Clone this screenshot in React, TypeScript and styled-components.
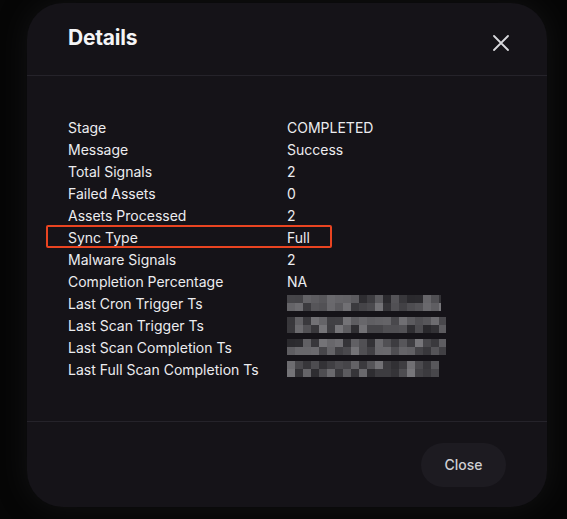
import React from 'react';
import styled, { createGlobalStyle } from 'styled-components';

const GlobalStyle = createGlobalStyle`
  html, body {
    margin: 0;
    padding: 0;
    background: #060606;
  }
  body {
    font-family: Inter, "Noto Sans", "Liberation Sans", sans-serif;
    -webkit-font-smoothing: antialiased;
  }
`;

type Row = { label: string; value?: string; hidden?: number; highlight?: boolean };

const rows: Row[] = [
  { label: 'Stage', value: 'COMPLETED' },
  { label: 'Message', value: 'Success' },
  { label: 'Total Signals', value: '2' },
  { label: 'Failed Assets', value: '0' },
  { label: 'Assets Processed', value: '2' },
  { label: 'Sync Type', value: 'Full', highlight: true },
  { label: 'Malware Signals', value: '2' },
  { label: 'Completion Percentage', value: 'NA' },
  { label: 'Last Cron Trigger Ts', hidden: 154 },
  { label: 'Last Scan Trigger Ts', hidden: 159 },
  { label: 'Last Scan Completion Ts', hidden: 159 },
  { label: 'Last Full Scan Completion Ts', hidden: 152 },
];

// pseudo random greys for the redacted timestamps
function greys(seed: number, count: number) {
  const out: string[] = [];
  let s = seed;
  for (let i = 0; i < count; i++) {
    s = (s * 9301 + 49297) % 233280;
    const v = 40 + Math.floor((s / 233280) * 80);
    out.push(`rgb(${v},${v - 1},${v + 3})`);
  }
  return out;
}

function Redacted({ width, seed }: { width: number; seed: number }) {
  const cell = 8;
  const cols = Math.ceil(width / cell);
  const colours = greys(seed, cols * 2);
  return (
    <svg width={width} height={16} viewBox={`0 0 ${width} 16`}>
      {colours.map((c, i) => (
        <rect
          key={i}
          x={(i % cols) * cell}
          y={Math.floor(i / cols) * cell}
          width={cell}
          height={cell}
          fill={c}
        />
      ))}
    </svg>
  );
}

export default function App() {
  return (
    <>
      <GlobalStyle />
      <Page>
        <Modal>
          <Header>
            <Title>Details</Title>
            <CloseIcon aria-label="close">
              <svg width="16" height="16" viewBox="0 0 16 16">
                <path d="M1 1 L15 15 M15 1 L1 15" stroke="#d8d8dc" strokeWidth="1.8" strokeLinecap="round" />
              </svg>
            </CloseIcon>
          </Header>
          <Body>
            {rows.map((r, i) => (
              <DetailRow key={r.label}>
                {r.highlight && <Highlight />}
                <Label>{r.label}</Label>
                {r.hidden ? (
                  <Value>
                    <Redacted width={r.hidden} seed={i * 71 + 13} />
                  </Value>
                ) : (
                  <Value>{r.value}</Value>
                )}
              </DetailRow>
            ))}
          </Body>
          <Footer>
            <CloseButton>Close</CloseButton>
          </Footer>
        </Modal>
      </Page>
    </>
  );
}

const Page = styled.div`
  width: 567px;
  height: 519px;
  padding: 3px 0 0 27px;
  box-sizing: border-box;
  background: #060606;
`;

const Modal = styled.div`
  width: 520px;
  height: 504px;
  background: #151318;
  border-radius: 36px;
  box-shadow: 0 0 30px rgba(40, 40, 44, 0.35);
  display: flex;
  flex-direction: column;
  overflow: hidden;
`;

const Header = styled.div`
  height: 73px;
  padding: 0 38px 0 41px;
  display: flex;
  align-items: center;
  justify-content: space-between;
  border-bottom: 1px solid #25232a;
  box-sizing: border-box;
`;

const Title = styled.h2`
  margin: 0 0 4px;
  font-size: 21px;
  font-weight: 700;
  color: #f4f4f6;
  letter-spacing: -0.2px;
`;

const CloseIcon = styled.button`
  background: none;
  border: 0;
  padding: 0;
  margin-top: 8px;
  display: flex;
  cursor: pointer;
`;

const Body = styled.div`
  flex: 1;
  padding: 40px 41px 0;
  display: flex;
  flex-direction: column;
`;

const DetailRow = styled.div`
  position: relative;
  display: grid;
  grid-template-columns: 219px 1fr;
  align-items: center;
  height: 22px;
`;

const Highlight = styled.div`
  position: absolute;
  left: -22px;
  top: -1px;
  width: 286px;
  height: 23px;
  border: 2px solid #ea4421;
  border-radius: 2px;
  box-sizing: border-box;
`;

const Label = styled.span`
  font-size: 14px;
  color: #ececef;
`;

const Value = styled.span`
  font-size: 14px;
  color: #ececef;
  display: flex;
  align-items: center;
`;

const Footer = styled.div`
  height: 86px;
  border-top: 1px solid #25232a;
  padding: 0 41px;
  display: flex;
  align-items: center;
  justify-content: flex-end;
  box-sizing: border-box;
`;

const CloseButton = styled.button`
  width: 85px;
  height: 44px;
  border: 0;
  border-radius: 22px;
  background: #1d1b21;
  color: #cfcfd3;
  font-family: Inter, "Noto Sans", sans-serif;
  font-size: 14px;
  font-weight: 500;
  cursor: pointer;
`;
